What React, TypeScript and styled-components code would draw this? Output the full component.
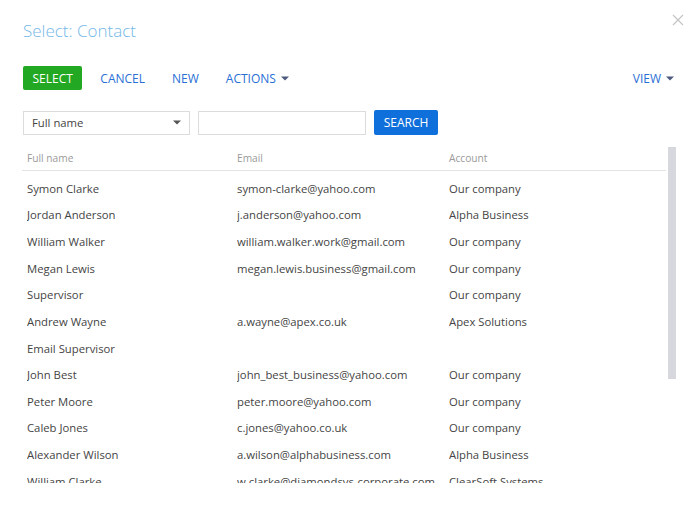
import React from "react";
import styled, { createGlobalStyle } from "styled-components";

const Global = createGlobalStyle`
  html, body { margin: 0; padding: 0; background: #fff; }
  body { font-family: "Open Sans", "Liberation Sans", sans-serif; width: 700px; height: 512px; overflow: hidden; }
  * { box-sizing: border-box; }
`;

const Page = styled.div`
  position: relative;
  width: 700px;
  height: 512px;
  padding: 0 0 0 23px;
  display: flex;
  flex-direction: column;
`;

const Title = styled.h1`
  margin: 19px 0 0 0;
  font-size: 17px;
  line-height: 24px;
  font-weight: 300;
  color: #74b8e8;
`;

const Close = styled.button`
  position: absolute;
  top: 13px;
  right: 15px;
  width: 14px;
  height: 14px;
  padding: 0;
  border: none;
  background: none;
  display: flex;
  align-items: center;
  justify-content: center;
`;

const Toolbar = styled.div`
  margin-top: 23px;
  display: flex;
  align-items: center;
  height: 24px;
  padding-right: 26px;
`;

const PrimaryButton = styled.button<{ $bg: string }>`
  height: 24px;
  padding: 0 9.5px;
  border: none;
  border-radius: 2px;
  background: ${(p) => p.$bg};
  color: #fff;
  font-family: inherit;
  font-size: 12px;
  text-transform: uppercase;
  display: flex;
  align-items: center;
`;

const LinkButton = styled.button<{ $ml: number }>`
  margin-left: ${(p) => p.$ml}px;
  height: 24px;
  padding: 0;
  border: none;
  background: none;
  color: #2a6fd6;
  font-family: inherit;
  font-size: 12px;
  display: flex;
  align-items: center;
  gap: 5px;
`;

const Spacer = styled.div`
  flex: 1;
`;

const FilterRow = styled.div`
  margin-top: 20px;
  display: flex;
  align-items: center;
  gap: 8px;
`;

const SelectBox = styled.div`
  width: 167px;
  height: 24px;
  border: 1px solid #dcdcdc;
  display: flex;
  align-items: center;
  justify-content: space-between;
  padding: 0 8px 0 8px;
  font-size: 11.3px;
  color: #444;
`;

const TextInput = styled.div`
  width: 168px;
  height: 24px;
  border: 1px solid #dcdcdc;
`;

const SearchButton = styled(PrimaryButton)`
  height: 25px;
  width: 64px;
  justify-content: center;
  padding: 0;
`;

const TableArea = styled.div`
  margin-top: 12px;
  margin-left: -1px;
  display: flex;
  height: 336px;
  overflow: hidden;
`;

const Table = styled.div`
  width: 644px;
  overflow: hidden;
`;

const Grid = styled.div`
  display: grid;
  grid-template-columns: 210px 212px 1fr;
  padding-left: 5px;
`;

const HeaderRow = styled(Grid)`
  height: 24px;
  padding-bottom: 2px;
  align-items: center;
  border-bottom: 1px solid #e4e4e4;
  font-size: 10.2px;
  color: #9a9a9a;
`;

const Body = styled.div`
  padding-top: 4px;
`;

const Row = styled(Grid)`
  height: 26.64px;
  align-items: center;
  font-size: 11.3px;
  color: #444;
  white-space: nowrap;
`;

const Cell = styled.div`
  overflow: hidden;
`;

const Track = styled.div`
  margin-left: 2px;
  width: 8px;
`;

const Thumb = styled.div`
  width: 8px;
  height: 232px;
  background: #d6d8de;
`;

const Caret = ({ color = "#4b5a7d" }: { color?: string }) => (
  <svg width="8" height="5" viewBox="0 0 8 5">
    <path d="M0 0.5 L8 0.5 L4 4.5 Z" fill={color} />
  </svg>
);

const rows: [string, string, string][] = [
  ["Symon Clarke", "symon-clarke@yahoo.com", "Our company"],
  ["Jordan Anderson", "j.anderson@yahoo.com", "Alpha Business"],
  ["William Walker", "william.walker.work@gmail.com", "Our company"],
  ["Megan Lewis", "megan.lewis.business@gmail.com", "Our company"],
  ["Supervisor", "", "Our company"],
  ["Andrew Wayne", "a.wayne@apex.co.uk", "Apex Solutions"],
  ["Email Supervisor", "", ""],
  ["John Best", "john_best_business@yahoo.com", "Our company"],
  ["Peter Moore", "peter.moore@yahoo.com", "Our company"],
  ["Caleb Jones", "c.jones@yahoo.co.uk", "Our company"],
  ["Alexander Wilson", "a.wilson@alphabusiness.com", "Alpha Business"],
  ["William Clarke", "w.clarke@diamondsys-corporate.com", "ClearSoft Systems"],
];

export default function App() {
  return (
    <Page>
      <Global />
      <Title>Select: Contact</Title>
      <Close aria-label="close">
        <svg width="12" height="12" viewBox="0 0 12 12">
          <path d="M1 1 L11 11 M11 1 L1 11" stroke="#c4c4c4" strokeWidth="1.2" />
        </svg>
      </Close>
      <Toolbar>
        <PrimaryButton $bg="#22a822">Select</PrimaryButton>
        <LinkButton $ml={18}>CANCEL</LinkButton>
        <LinkButton $ml={27}>NEW</LinkButton>
        <LinkButton $ml={27}>
          ACTIONS <Caret />
        </LinkButton>
        <Spacer />
        <LinkButton $ml={0}>
          VIEW <Caret />
        </LinkButton>
      </Toolbar>
      <FilterRow>
        <SelectBox>
          Full name <Caret color="#555" />
        </SelectBox>
        <TextInput />
        <SearchButton $bg="#0f6fdb">Search</SearchButton>
      </FilterRow>
      <TableArea>
        <Table>
          <HeaderRow>
            <Cell>Full name</Cell>
            <Cell>Email</Cell>
            <Cell>Account</Cell>
          </HeaderRow>
          <Body>
            {rows.map((r, i) => (
              <Row key={i}>
                <Cell>{r[0]}</Cell>
                <Cell>{r[1]}</Cell>
                <Cell>{r[2]}</Cell>
              </Row>
            ))}
          </Body>
        </Table>
        <Track>
          <Thumb />
        </Track>
      </TableArea>
    </Page>
  );
}
